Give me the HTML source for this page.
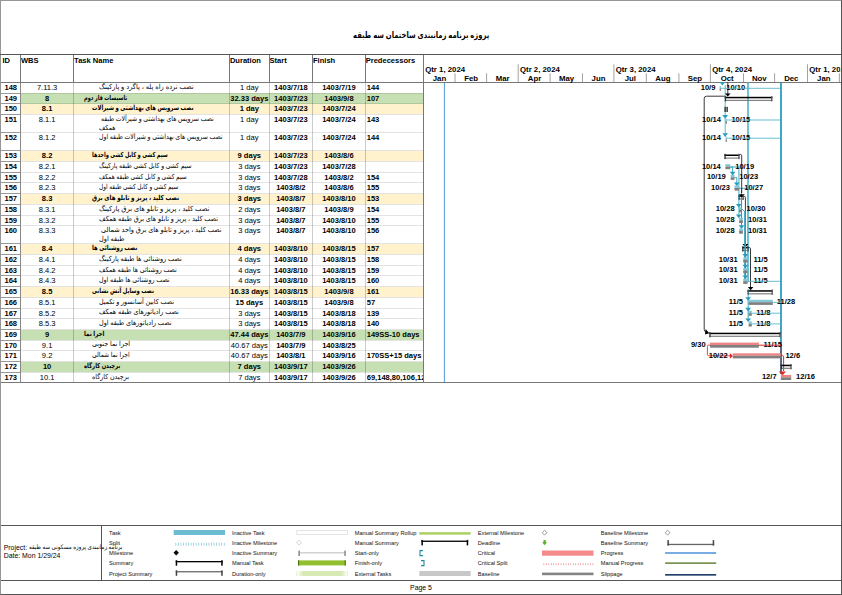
<!DOCTYPE html>
<html lang="fa"><head><meta charset="utf-8"><title>پروژه برنامه زمانبندی ساختمان سه طبقه</title>
<style>
html,body{margin:0;padding:0;background:#fff;}
body{width:842px;height:595px;position:relative;overflow:hidden;font-family:"Liberation Sans","DejaVu Sans",sans-serif;font-size:7.55px;color:#000;}
.a{position:absolute;}
.r{position:absolute;left:0;width:842px;}
.c{position:absolute;top:0;height:100%;white-space:nowrap;overflow:hidden;line-height:9px;box-sizing:border-box;padding-top:0.8px;}
.b{font-weight:bold;}
.ctr{text-align:center;}
.nm{direction:ltr;text-align:left;}
.nm span{unicode-bidi:isolate;direction:rtl;display:inline-block;white-space:nowrap;}
.hl{position:absolute;height:0;border-top:1px solid rgba(0,0,0,0.11);}
.vl{position:absolute;width:0;border-left:1px solid rgba(0,0,0,0.2);}
.lg{position:absolute;font-size:5.65px;white-space:nowrap;line-height:6px;color:#111;}
</style></head><body>
<div class="a" style="left:0;top:0;width:842px;height:595px;border:1px solid #555;box-sizing:border-box;border-top-color:#969696;border-left-color:#969696;"></div>
<div class="a" style="left:0;top:53.7px;width:841px;height:1.1px;background:#555;"></div>
<div class="a b" style="left:300px;width:242px;top:29.5px;text-align:center;font-size:8.6px;line-height:11px;direction:rtl;"><span id="ttl" style="display:inline-block;transform:scaleX(0.79);">پروژه برنامه زمانبندی ساختمان سه طبقه</span></div>
<div class="a b" style="left:2.4px;top:56.2px;line-height:9px;">ID</div>
<div class="a b" style="left:20.9px;top:56.2px;line-height:9px;">WBS</div>
<div class="a b" style="left:74.1px;top:56.2px;line-height:9px;">Task Name</div>
<div class="a b" style="left:229.9px;top:56.2px;line-height:9px;">Duration</div>
<div class="a b" style="left:269.5px;top:56.2px;line-height:9px;">Start</div>
<div class="a b" style="left:313.0px;top:56.2px;line-height:9px;">Finish</div>
<div class="a b" style="left:365.7px;top:56.2px;line-height:9px;">Predecessors</div>
<div class="r" style="top:82.30px;height:10.70px;">
<div class="c b ctr" style="left:1.0px;width:19.5px;">148</div>
<div class="c ctr" style="left:20.5px;width:53.2px;">7.11.3</div>
<div class="c nm" style="left:99.4px;width:130.1px;font-size:7.00px;line-height:8.6px;padding-top:0.6px;"><span id="n148_0" style="transform:scaleX(0.952);transform-origin:0 50%;margin-left:0.0px;">نصب نرده راه پله ، پاگرد و پارکینگ</span></div>
<div class="c ctr" style="left:229.5px;width:39.6px;">1 day</div>
<div class="c b ctr" style="left:269.1px;width:43.5px;">1403/7/18</div>
<div class="c b ctr" style="left:312.6px;width:52.7px;">1403/7/19</div>
<div class="c b" style="left:366.7px;width:56.3px;">144</div>
</div>
<div class="r" style="top:93.00px;height:10.70px;">
<div class="a" style="left:20.9px;top:0.4px;width:402.3px;height:10.20px;background:#c6e0b4;"></div>
<div class="c b ctr" style="left:1.0px;width:19.5px;">149</div>
<div class="c ctr b" style="left:20.5px;width:53.2px;">8</div>
<div class="c nm b" style="left:83.7px;width:145.8px;font-size:7.00px;line-height:8.6px;padding-top:0.6px;"><span id="n149_0" style="transform:scaleX(0.720);transform-origin:0 50%;margin-left:0.0px;">تاسیسات فاز دوم</span></div>
<div class="c ctr b" style="left:229.5px;width:39.6px;">32.33 days</div>
<div class="c b ctr" style="left:269.1px;width:43.5px;">1403/7/23</div>
<div class="c b ctr" style="left:312.6px;width:52.7px;">1403/9/8</div>
<div class="c b" style="left:366.7px;width:56.3px;">107</div>
</div>
<div class="r" style="top:103.70px;height:10.70px;">
<div class="a" style="left:20.9px;top:0.4px;width:402.3px;height:10.20px;background:#fff2cc;"></div>
<div class="c b ctr" style="left:1.0px;width:19.5px;">150</div>
<div class="c ctr b" style="left:20.5px;width:53.2px;">8.1</div>
<div class="c nm b" style="left:91.6px;width:137.9px;font-size:7.00px;line-height:8.6px;padding-top:0.6px;"><span id="n150_0" style="transform:scaleX(0.767);transform-origin:0 50%;margin-left:0.0px;">نصب سرویس های بهداشتی و شیرآلات</span></div>
<div class="c ctr b" style="left:229.5px;width:39.6px;">1 day</div>
<div class="c b ctr" style="left:269.1px;width:43.5px;">1403/7/23</div>
<div class="c b ctr" style="left:312.6px;width:52.7px;">1403/7/24</div>
<div class="c b" style="left:366.7px;width:56.3px;"></div>
</div>
<div class="r" style="top:114.40px;height:18.10px;">
<div class="c b ctr" style="left:1.0px;width:19.5px;">151</div>
<div class="c ctr" style="left:20.5px;width:53.2px;">8.1.1</div>
<div class="c nm" style="left:99.4px;width:130.1px;font-size:7.00px;line-height:8.6px;padding-top:0.6px;"><span id="n151_0" style="transform:scaleX(0.872);transform-origin:0 50%;margin-left:2.0px;">نصب سرویس های بهداشتی و شیرآلات طبقه</span><br><span id="n151_1" style="transform:scaleX(0.872);transform-origin:0 50%;margin-left:0.0px;">همکف</span></div>
<div class="c ctr" style="left:229.5px;width:39.6px;">1 day</div>
<div class="c b ctr" style="left:269.1px;width:43.5px;">1403/7/23</div>
<div class="c b ctr" style="left:312.6px;width:52.7px;">1403/7/24</div>
<div class="c b" style="left:366.7px;width:56.3px;">143</div>
</div>
<div class="r" style="top:132.50px;height:18.10px;">
<div class="c b ctr" style="left:1.0px;width:19.5px;">152</div>
<div class="c ctr" style="left:20.5px;width:53.2px;">8.1.2</div>
<div class="c nm" style="left:99.4px;width:130.1px;font-size:7.00px;line-height:8.6px;padding-top:0.6px;"><span id="n152_0" style="transform:scaleX(0.873);transform-origin:0 50%;margin-left:0.0px;">نصب سرویس های بهداشتی و شیرآلات طبقه اول</span></div>
<div class="c ctr" style="left:229.5px;width:39.6px;">1 day</div>
<div class="c b ctr" style="left:269.1px;width:43.5px;">1403/7/23</div>
<div class="c b ctr" style="left:312.6px;width:52.7px;">1403/7/24</div>
<div class="c b" style="left:366.7px;width:56.3px;">144</div>
</div>
<div class="r" style="top:150.60px;height:10.70px;">
<div class="a" style="left:20.9px;top:0.4px;width:402.3px;height:10.20px;background:#fff2cc;"></div>
<div class="c b ctr" style="left:1.0px;width:19.5px;">153</div>
<div class="c ctr b" style="left:20.5px;width:53.2px;">8.2</div>
<div class="c nm b" style="left:91.6px;width:137.9px;font-size:7.00px;line-height:8.6px;padding-top:0.6px;"><span id="n153_0" style="transform:scaleX(0.724);transform-origin:0 50%;margin-left:0.0px;">سیم کشی و کابل کشی واحدها</span></div>
<div class="c ctr b" style="left:229.5px;width:39.6px;">9 days</div>
<div class="c b ctr" style="left:269.1px;width:43.5px;">1403/7/23</div>
<div class="c b ctr" style="left:312.6px;width:52.7px;">1403/8/6</div>
<div class="c b" style="left:366.7px;width:56.3px;"></div>
</div>
<div class="r" style="top:161.30px;height:10.70px;">
<div class="c b ctr" style="left:1.0px;width:19.5px;">154</div>
<div class="c ctr" style="left:20.5px;width:53.2px;">8.2.1</div>
<div class="c nm" style="left:99.4px;width:130.1px;font-size:7.00px;line-height:8.6px;padding-top:0.6px;"><span id="n154_0" style="transform:scaleX(0.861);transform-origin:0 50%;margin-left:0.0px;">سیم کشی و کابل کشی طبقه پارکینگ</span></div>
<div class="c ctr" style="left:229.5px;width:39.6px;">3 days</div>
<div class="c b ctr" style="left:269.1px;width:43.5px;">1403/7/23</div>
<div class="c b ctr" style="left:312.6px;width:52.7px;">1403/7/28</div>
<div class="c b" style="left:366.7px;width:56.3px;"></div>
</div>
<div class="r" style="top:172.00px;height:10.70px;">
<div class="c b ctr" style="left:1.0px;width:19.5px;">155</div>
<div class="c ctr" style="left:20.5px;width:53.2px;">8.2.2</div>
<div class="c nm" style="left:99.4px;width:130.1px;font-size:7.00px;line-height:8.6px;padding-top:0.6px;"><span id="n155_0" style="transform:scaleX(0.834);transform-origin:0 50%;margin-left:0.0px;">سیم کشی و کابل کشی طبقه همکف</span></div>
<div class="c ctr" style="left:229.5px;width:39.6px;">3 days</div>
<div class="c b ctr" style="left:269.1px;width:43.5px;">1403/7/28</div>
<div class="c b ctr" style="left:312.6px;width:52.7px;">1403/8/2</div>
<div class="c b" style="left:366.7px;width:56.3px;">154</div>
</div>
<div class="r" style="top:182.70px;height:10.70px;">
<div class="c b ctr" style="left:1.0px;width:19.5px;">156</div>
<div class="c ctr" style="left:20.5px;width:53.2px;">8.2.3</div>
<div class="c nm" style="left:99.4px;width:130.1px;font-size:7.00px;line-height:8.6px;padding-top:0.6px;"><span id="n156_0" style="transform:scaleX(0.822);transform-origin:0 50%;margin-left:0.0px;">سیم کشی و کابل کشی طبقه اول</span></div>
<div class="c ctr" style="left:229.5px;width:39.6px;">3 days</div>
<div class="c b ctr" style="left:269.1px;width:43.5px;">1403/8/2</div>
<div class="c b ctr" style="left:312.6px;width:52.7px;">1403/8/6</div>
<div class="c b" style="left:366.7px;width:56.3px;">155</div>
</div>
<div class="r" style="top:193.40px;height:10.70px;">
<div class="a" style="left:20.9px;top:0.4px;width:402.3px;height:10.20px;background:#fff2cc;"></div>
<div class="c b ctr" style="left:1.0px;width:19.5px;">157</div>
<div class="c ctr b" style="left:20.5px;width:53.2px;">8.3</div>
<div class="c nm b" style="left:91.6px;width:137.9px;font-size:7.00px;line-height:8.6px;padding-top:0.6px;"><span id="n157_0" style="transform:scaleX(0.810);transform-origin:0 50%;margin-left:0.0px;">نصب کلید ، پریز و تابلو های برق</span></div>
<div class="c ctr b" style="left:229.5px;width:39.6px;">3 days</div>
<div class="c b ctr" style="left:269.1px;width:43.5px;">1403/8/7</div>
<div class="c b ctr" style="left:312.6px;width:52.7px;">1403/8/10</div>
<div class="c b" style="left:366.7px;width:56.3px;">153</div>
</div>
<div class="r" style="top:204.10px;height:10.70px;">
<div class="c b ctr" style="left:1.0px;width:19.5px;">158</div>
<div class="c ctr" style="left:20.5px;width:53.2px;">8.3.1</div>
<div class="c nm" style="left:99.4px;width:130.1px;font-size:7.00px;line-height:8.6px;padding-top:0.6px;"><span id="n158_0" style="transform:scaleX(0.960);transform-origin:0 50%;margin-left:0.0px;">نصب کلید ، پریز و تابلو های برق پارکینگ</span></div>
<div class="c ctr" style="left:229.5px;width:39.6px;">2 days</div>
<div class="c b ctr" style="left:269.1px;width:43.5px;">1403/8/7</div>
<div class="c b ctr" style="left:312.6px;width:52.7px;">1403/8/9</div>
<div class="c b" style="left:366.7px;width:56.3px;">154</div>
</div>
<div class="r" style="top:214.80px;height:10.70px;">
<div class="c b ctr" style="left:1.0px;width:19.5px;">159</div>
<div class="c ctr" style="left:20.5px;width:53.2px;">8.3.2</div>
<div class="c nm" style="left:99.4px;width:130.1px;font-size:7.00px;line-height:8.6px;padding-top:0.6px;"><span id="n159_0" style="transform:scaleX(0.919);transform-origin:0 50%;margin-left:0.0px;">نصب کلید ، پریز و تابلو های برق طبقه همکف</span></div>
<div class="c ctr" style="left:229.5px;width:39.6px;">3 days</div>
<div class="c b ctr" style="left:269.1px;width:43.5px;">1403/8/7</div>
<div class="c b ctr" style="left:312.6px;width:52.7px;">1403/8/10</div>
<div class="c b" style="left:366.7px;width:56.3px;">155</div>
</div>
<div class="r" style="top:225.50px;height:18.10px;">
<div class="c b ctr" style="left:1.0px;width:19.5px;">160</div>
<div class="c ctr" style="left:20.5px;width:53.2px;">8.3.3</div>
<div class="c nm" style="left:99.4px;width:130.1px;font-size:7.00px;line-height:8.6px;padding-top:0.6px;"><span id="n160_0" style="transform:scaleX(0.935);transform-origin:0 50%;margin-left:2.0px;">نصب کلید ، پریز و تابلو های برق  واحد شمالی</span><br><span id="n160_1" style="transform:scaleX(0.935);transform-origin:0 50%;margin-left:0.0px;">طبقه اول</span></div>
<div class="c ctr" style="left:229.5px;width:39.6px;">3 days</div>
<div class="c b ctr" style="left:269.1px;width:43.5px;">1403/8/7</div>
<div class="c b ctr" style="left:312.6px;width:52.7px;">1403/8/10</div>
<div class="c b" style="left:366.7px;width:56.3px;">156</div>
</div>
<div class="r" style="top:243.60px;height:10.70px;">
<div class="a" style="left:20.9px;top:0.4px;width:402.3px;height:10.20px;background:#fff2cc;"></div>
<div class="c b ctr" style="left:1.0px;width:19.5px;">161</div>
<div class="c ctr b" style="left:20.5px;width:53.2px;">8.4</div>
<div class="c nm b" style="left:91.6px;width:137.9px;font-size:7.00px;line-height:8.6px;padding-top:0.6px;"><span id="n161_0" style="transform:scaleX(0.772);transform-origin:0 50%;margin-left:0.0px;">نصب روشنائی ها</span></div>
<div class="c ctr b" style="left:229.5px;width:39.6px;">4 days</div>
<div class="c b ctr" style="left:269.1px;width:43.5px;">1403/8/10</div>
<div class="c b ctr" style="left:312.6px;width:52.7px;">1403/8/15</div>
<div class="c b" style="left:366.7px;width:56.3px;">157</div>
</div>
<div class="r" style="top:254.30px;height:10.70px;">
<div class="c b ctr" style="left:1.0px;width:19.5px;">162</div>
<div class="c ctr" style="left:20.5px;width:53.2px;">8.4.1</div>
<div class="c nm" style="left:99.4px;width:130.1px;font-size:7.00px;line-height:8.6px;padding-top:0.6px;"><span id="n162_0" style="transform:scaleX(0.925);transform-origin:0 50%;margin-left:0.0px;">نصب روشنائی ها طبقه پارکینگ</span></div>
<div class="c ctr" style="left:229.5px;width:39.6px;">4 days</div>
<div class="c b ctr" style="left:269.1px;width:43.5px;">1403/8/10</div>
<div class="c b ctr" style="left:312.6px;width:52.7px;">1403/8/15</div>
<div class="c b" style="left:366.7px;width:56.3px;">158</div>
</div>
<div class="r" style="top:265.00px;height:10.70px;">
<div class="c b ctr" style="left:1.0px;width:19.5px;">163</div>
<div class="c ctr" style="left:20.5px;width:53.2px;">8.4.2</div>
<div class="c nm" style="left:99.4px;width:130.1px;font-size:7.00px;line-height:8.6px;padding-top:0.6px;"><span id="n163_0" style="transform:scaleX(0.894);transform-origin:0 50%;margin-left:0.0px;">نصب روشنائی ها طبقه همکف</span></div>
<div class="c ctr" style="left:229.5px;width:39.6px;">4 days</div>
<div class="c b ctr" style="left:269.1px;width:43.5px;">1403/8/10</div>
<div class="c b ctr" style="left:312.6px;width:52.7px;">1403/8/15</div>
<div class="c b" style="left:366.7px;width:56.3px;">159</div>
</div>
<div class="r" style="top:275.70px;height:10.70px;">
<div class="c b ctr" style="left:1.0px;width:19.5px;">164</div>
<div class="c ctr" style="left:20.5px;width:53.2px;">8.4.3</div>
<div class="c nm" style="left:99.4px;width:130.1px;font-size:7.00px;line-height:8.6px;padding-top:0.6px;"><span id="n164_0" style="transform:scaleX(0.899);transform-origin:0 50%;margin-left:0.0px;">نصب روشنائی ها طبقه اول</span></div>
<div class="c ctr" style="left:229.5px;width:39.6px;">4 days</div>
<div class="c b ctr" style="left:269.1px;width:43.5px;">1403/8/10</div>
<div class="c b ctr" style="left:312.6px;width:52.7px;">1403/8/15</div>
<div class="c b" style="left:366.7px;width:56.3px;">160</div>
</div>
<div class="r" style="top:286.40px;height:10.70px;">
<div class="a" style="left:20.9px;top:0.4px;width:402.3px;height:10.20px;background:#fff2cc;"></div>
<div class="c b ctr" style="left:1.0px;width:19.5px;">165</div>
<div class="c ctr b" style="left:20.5px;width:53.2px;">8.5</div>
<div class="c nm b" style="left:91.6px;width:137.9px;font-size:7.00px;line-height:8.6px;padding-top:0.6px;"><span id="n165_0" style="transform:scaleX(0.751);transform-origin:0 50%;margin-left:0.0px;">نصب وسایل آتش نشانی</span></div>
<div class="c ctr b" style="left:229.5px;width:39.6px;">16.33 days</div>
<div class="c b ctr" style="left:269.1px;width:43.5px;">1403/8/15</div>
<div class="c b ctr" style="left:312.6px;width:52.7px;">1403/9/8</div>
<div class="c b" style="left:366.7px;width:56.3px;">161</div>
</div>
<div class="r" style="top:297.10px;height:10.70px;">
<div class="c b ctr" style="left:1.0px;width:19.5px;">166</div>
<div class="c ctr" style="left:20.5px;width:53.2px;">8.5.1</div>
<div class="c nm" style="left:99.4px;width:130.1px;font-size:7.00px;line-height:8.6px;padding-top:0.6px;"><span id="n166_0" style="transform:scaleX(0.899);transform-origin:0 50%;margin-left:0.0px;">نصب کابین آسانسور و تکمیل</span></div>
<div class="c ctr b" style="left:229.5px;width:39.6px;">15 days</div>
<div class="c b ctr" style="left:269.1px;width:43.5px;">1403/8/15</div>
<div class="c b ctr" style="left:312.6px;width:52.7px;">1403/9/8</div>
<div class="c b" style="left:366.7px;width:56.3px;">57</div>
</div>
<div class="r" style="top:307.80px;height:10.70px;">
<div class="c b ctr" style="left:1.0px;width:19.5px;">167</div>
<div class="c ctr" style="left:20.5px;width:53.2px;">8.5.2</div>
<div class="c nm" style="left:99.4px;width:130.1px;font-size:7.00px;line-height:8.6px;padding-top:0.6px;"><span id="n167_0" style="transform:scaleX(0.914);transform-origin:0 50%;margin-left:0.0px;">نصب رادیاتورهای طبقه همکف</span></div>
<div class="c ctr" style="left:229.5px;width:39.6px;">3 days</div>
<div class="c b ctr" style="left:269.1px;width:43.5px;">1403/8/15</div>
<div class="c b ctr" style="left:312.6px;width:52.7px;">1403/8/18</div>
<div class="c b" style="left:366.7px;width:56.3px;">139</div>
</div>
<div class="r" style="top:318.50px;height:10.70px;">
<div class="c b ctr" style="left:1.0px;width:19.5px;">168</div>
<div class="c ctr" style="left:20.5px;width:53.2px;">8.5.3</div>
<div class="c nm" style="left:99.4px;width:130.1px;font-size:7.00px;line-height:8.6px;padding-top:0.6px;"><span id="n168_0" style="transform:scaleX(0.919);transform-origin:0 50%;margin-left:0.0px;">نصب رادیاتورهای طبقه اول</span></div>
<div class="c ctr" style="left:229.5px;width:39.6px;">3 days</div>
<div class="c b ctr" style="left:269.1px;width:43.5px;">1403/8/15</div>
<div class="c b ctr" style="left:312.6px;width:52.7px;">1403/8/18</div>
<div class="c b" style="left:366.7px;width:56.3px;">140</div>
</div>
<div class="r" style="top:329.20px;height:10.70px;">
<div class="a" style="left:20.9px;top:0.4px;width:402.3px;height:10.20px;background:#c6e0b4;"></div>
<div class="c b ctr" style="left:1.0px;width:19.5px;">169</div>
<div class="c ctr b" style="left:20.5px;width:53.2px;">9</div>
<div class="c nm b" style="left:83.7px;width:145.8px;font-size:7.00px;line-height:8.6px;padding-top:0.6px;"><span id="n169_0" style="transform:scaleX(0.782);transform-origin:0 50%;margin-left:0.0px;">اجرا نما</span></div>
<div class="c ctr b" style="left:229.5px;width:39.6px;">47.44 days</div>
<div class="c b ctr" style="left:269.1px;width:43.5px;">1403/7/9</div>
<div class="c b ctr" style="left:312.6px;width:52.7px;">1403/9/16</div>
<div class="c b" style="left:366.7px;width:56.3px;">149SS-10 days</div>
</div>
<div class="r" style="top:339.90px;height:10.70px;">
<div class="c b ctr" style="left:1.0px;width:19.5px;">170</div>
<div class="c ctr" style="left:20.5px;width:53.2px;">9.1</div>
<div class="c nm" style="left:91.6px;width:137.9px;font-size:7.00px;line-height:8.6px;padding-top:0.6px;"><span id="n170_0" style="transform:scaleX(0.908);transform-origin:0 50%;margin-left:0.0px;">اجرا نما جنوبی</span></div>
<div class="c ctr" style="left:229.5px;width:39.6px;">40.67 days</div>
<div class="c b ctr" style="left:269.1px;width:43.5px;">1403/7/9</div>
<div class="c b ctr" style="left:312.6px;width:52.7px;">1403/8/25</div>
<div class="c b" style="left:366.7px;width:56.3px;"></div>
</div>
<div class="r" style="top:350.60px;height:10.70px;">
<div class="c b ctr" style="left:1.0px;width:19.5px;">171</div>
<div class="c ctr" style="left:20.5px;width:53.2px;">9.2</div>
<div class="c nm" style="left:91.6px;width:137.9px;font-size:7.00px;line-height:8.6px;padding-top:0.6px;"><span id="n171_0" style="transform:scaleX(0.855);transform-origin:0 50%;margin-left:0.0px;">اجرا نما شمالی</span></div>
<div class="c ctr" style="left:229.5px;width:39.6px;">40.67 days</div>
<div class="c b ctr" style="left:269.1px;width:43.5px;">1403/8/1</div>
<div class="c b ctr" style="left:312.6px;width:52.7px;">1403/9/16</div>
<div class="c b" style="left:366.7px;width:56.3px;">170SS+15 days</div>
</div>
<div class="r" style="top:361.30px;height:10.70px;">
<div class="a" style="left:20.9px;top:0.4px;width:402.3px;height:10.20px;background:#c6e0b4;"></div>
<div class="c b ctr" style="left:1.0px;width:19.5px;">172</div>
<div class="c ctr b" style="left:20.5px;width:53.2px;">10</div>
<div class="c nm b" style="left:83.7px;width:145.8px;font-size:7.00px;line-height:8.6px;padding-top:0.6px;"><span id="n172_0" style="transform:scaleX(0.750);transform-origin:0 50%;margin-left:0.0px;">برچیدن کارگاه</span></div>
<div class="c ctr b" style="left:229.5px;width:39.6px;">7 days</div>
<div class="c b ctr" style="left:269.1px;width:43.5px;">1403/9/17</div>
<div class="c b ctr" style="left:312.6px;width:52.7px;">1403/9/26</div>
<div class="c b" style="left:366.7px;width:56.3px;"></div>
</div>
<div class="r" style="top:372.00px;height:10.70px;">
<div class="c b ctr" style="left:1.0px;width:19.5px;">173</div>
<div class="c ctr" style="left:20.5px;width:53.2px;">10.1</div>
<div class="c nm" style="left:91.6px;width:137.9px;font-size:7.00px;line-height:8.6px;padding-top:0.6px;"><span id="n173_0" style="transform:scaleX(0.900);transform-origin:0 50%;margin-left:0.0px;">برچیدن کارگاه</span></div>
<div class="c ctr" style="left:229.5px;width:39.6px;">7 days</div>
<div class="c b ctr" style="left:269.1px;width:43.5px;">1403/9/17</div>
<div class="c b ctr" style="left:312.6px;width:52.7px;">1403/9/26</div>
<div class="c b" style="left:366.7px;width:56.3px;">69,148,80,106,12</div>
</div>
<div class="hl" style="left:20.5px;top:92.70px;width:402.9px;"></div>
<div class="hl" style="left:1px;top:92.70px;width:19.5px;border-top-color:#999;"></div>
<div class="hl" style="left:20.5px;top:103.40px;width:402.9px;"></div>
<div class="hl" style="left:1px;top:103.40px;width:19.5px;border-top-color:#999;"></div>
<div class="hl" style="left:20.5px;top:114.10px;width:402.9px;"></div>
<div class="hl" style="left:1px;top:114.10px;width:19.5px;border-top-color:#999;"></div>
<div class="hl" style="left:20.5px;top:132.20px;width:402.9px;"></div>
<div class="hl" style="left:1px;top:132.20px;width:19.5px;border-top-color:#999;"></div>
<div class="hl" style="left:20.5px;top:150.30px;width:402.9px;"></div>
<div class="hl" style="left:1px;top:150.30px;width:19.5px;border-top-color:#999;"></div>
<div class="hl" style="left:20.5px;top:161.00px;width:402.9px;"></div>
<div class="hl" style="left:1px;top:161.00px;width:19.5px;border-top-color:#999;"></div>
<div class="hl" style="left:20.5px;top:171.70px;width:402.9px;"></div>
<div class="hl" style="left:1px;top:171.70px;width:19.5px;border-top-color:#999;"></div>
<div class="hl" style="left:20.5px;top:182.40px;width:402.9px;"></div>
<div class="hl" style="left:1px;top:182.40px;width:19.5px;border-top-color:#999;"></div>
<div class="hl" style="left:20.5px;top:193.10px;width:402.9px;"></div>
<div class="hl" style="left:1px;top:193.10px;width:19.5px;border-top-color:#999;"></div>
<div class="hl" style="left:20.5px;top:203.80px;width:402.9px;"></div>
<div class="hl" style="left:1px;top:203.80px;width:19.5px;border-top-color:#999;"></div>
<div class="hl" style="left:20.5px;top:214.50px;width:402.9px;"></div>
<div class="hl" style="left:1px;top:214.50px;width:19.5px;border-top-color:#999;"></div>
<div class="hl" style="left:20.5px;top:225.20px;width:402.9px;"></div>
<div class="hl" style="left:1px;top:225.20px;width:19.5px;border-top-color:#999;"></div>
<div class="hl" style="left:20.5px;top:243.30px;width:402.9px;"></div>
<div class="hl" style="left:1px;top:243.30px;width:19.5px;border-top-color:#999;"></div>
<div class="hl" style="left:20.5px;top:254.00px;width:402.9px;"></div>
<div class="hl" style="left:1px;top:254.00px;width:19.5px;border-top-color:#999;"></div>
<div class="hl" style="left:20.5px;top:264.70px;width:402.9px;"></div>
<div class="hl" style="left:1px;top:264.70px;width:19.5px;border-top-color:#999;"></div>
<div class="hl" style="left:20.5px;top:275.40px;width:402.9px;"></div>
<div class="hl" style="left:1px;top:275.40px;width:19.5px;border-top-color:#999;"></div>
<div class="hl" style="left:20.5px;top:286.10px;width:402.9px;"></div>
<div class="hl" style="left:1px;top:286.10px;width:19.5px;border-top-color:#999;"></div>
<div class="hl" style="left:20.5px;top:296.80px;width:402.9px;"></div>
<div class="hl" style="left:1px;top:296.80px;width:19.5px;border-top-color:#999;"></div>
<div class="hl" style="left:20.5px;top:307.50px;width:402.9px;"></div>
<div class="hl" style="left:1px;top:307.50px;width:19.5px;border-top-color:#999;"></div>
<div class="hl" style="left:20.5px;top:318.20px;width:402.9px;"></div>
<div class="hl" style="left:1px;top:318.20px;width:19.5px;border-top-color:#999;"></div>
<div class="hl" style="left:20.5px;top:328.90px;width:402.9px;"></div>
<div class="hl" style="left:1px;top:328.90px;width:19.5px;border-top-color:#999;"></div>
<div class="hl" style="left:20.5px;top:339.60px;width:402.9px;"></div>
<div class="hl" style="left:1px;top:339.60px;width:19.5px;border-top-color:#999;"></div>
<div class="hl" style="left:20.5px;top:350.30px;width:402.9px;"></div>
<div class="hl" style="left:1px;top:350.30px;width:19.5px;border-top-color:#999;"></div>
<div class="hl" style="left:20.5px;top:361.00px;width:402.9px;"></div>
<div class="hl" style="left:1px;top:361.00px;width:19.5px;border-top-color:#999;"></div>
<div class="hl" style="left:20.5px;top:371.70px;width:402.9px;"></div>
<div class="hl" style="left:1px;top:371.70px;width:19.5px;border-top-color:#999;"></div>
<div class="vl" style="left:20.2px;top:54.5px;height:328.2px;border-left-color:#888;"></div>
<div class="vl" style="left:73.4px;top:54.5px;height:328.2px;border-left-color:rgba(0,0,0,0.2);"></div>
<div class="vl" style="left:229.2px;top:54.5px;height:328.2px;border-left-color:rgba(0,0,0,0.2);"></div>
<div class="vl" style="left:268.8px;top:54.5px;height:328.2px;border-left-color:rgba(0,0,0,0.2);"></div>
<div class="vl" style="left:312.3px;top:54.5px;height:328.2px;border-left-color:rgba(0,0,0,0.2);"></div>
<div class="vl" style="left:365.0px;top:54.5px;height:328.2px;border-left-color:rgba(0,0,0,0.2);"></div>
<div class="vl" style="left:20.2px;top:54.5px;height:27.8px;border-left-color:#777;"></div>
<div class="vl" style="left:73.4px;top:54.5px;height:27.8px;border-left-color:#777;"></div>
<div class="vl" style="left:229.2px;top:54.5px;height:27.8px;border-left-color:#777;"></div>
<div class="vl" style="left:268.8px;top:54.5px;height:27.8px;border-left-color:#777;"></div>
<div class="vl" style="left:312.3px;top:54.5px;height:27.8px;border-left-color:#777;"></div>
<div class="vl" style="left:365.0px;top:54.5px;height:27.8px;border-left-color:#777;"></div>
<div class="a" style="left:423.0px;top:54.5px;width:0.9px;height:328.2px;background:#777;"></div>
<div class="a" style="left:1px;top:81.9px;width:840px;height:0.9px;background:#777;"></div>
<div class="a" style="left:1px;top:382.3px;width:840px;height:0.9px;background:#777;"></div>
<svg class="a" style="left:0;top:0;" width="842" height="595" viewBox="0 0 842 595" font-family="Liberation Sans, DejaVu Sans, sans-serif" font-weight="bold" font-size="7.55">
<defs><clipPath id="cp"><rect x="423.9" y="54" width="416.6" height="329"/></clipPath></defs>
<g clip-path="url(#cp)">
<line x1="518.2" y1="64.3" x2="518.2" y2="82.3" stroke="#8a8a8a" stroke-width="0.8"/>
<line x1="613.9" y1="64.3" x2="613.9" y2="82.3" stroke="#8a8a8a" stroke-width="0.8"/>
<line x1="710.4" y1="64.3" x2="710.4" y2="82.3" stroke="#8a8a8a" stroke-width="0.8"/>
<line x1="807.5" y1="64.3" x2="807.5" y2="82.3" stroke="#8a8a8a" stroke-width="0.8"/>
<line x1="455.0" y1="73.3" x2="455.0" y2="82.3" stroke="#8a8a8a" stroke-width="0.8"/>
<line x1="486.6" y1="73.3" x2="486.6" y2="82.3" stroke="#8a8a8a" stroke-width="0.8"/>
<line x1="550.1" y1="73.3" x2="550.1" y2="82.3" stroke="#8a8a8a" stroke-width="0.8"/>
<line x1="582.5" y1="73.3" x2="582.5" y2="82.3" stroke="#8a8a8a" stroke-width="0.8"/>
<line x1="646.3" y1="73.3" x2="646.3" y2="82.3" stroke="#8a8a8a" stroke-width="0.8"/>
<line x1="678.9" y1="73.3" x2="678.9" y2="82.3" stroke="#8a8a8a" stroke-width="0.8"/>
<line x1="743.5" y1="73.3" x2="743.5" y2="82.3" stroke="#8a8a8a" stroke-width="0.8"/>
<line x1="774.6" y1="73.3" x2="774.6" y2="82.3" stroke="#8a8a8a" stroke-width="0.8"/>
<line x1="839.4" y1="73.3" x2="839.4" y2="82.3" stroke="#8a8a8a" stroke-width="0.8"/>
<text x="425.2" y="71.9" font-size="7.8">Qtr 1, 2024</text>
<text x="520.0" y="71.9" font-size="7.8">Qtr 2, 2024</text>
<text x="615.7" y="71.9" font-size="7.8">Qtr 3, 2024</text>
<text x="712.2" y="71.9" font-size="7.8">Qtr 4, 2024</text>
<text x="809.3" y="71.9" font-size="7.8">Qtr 1, 2025</text>
<text x="439.5" y="80.7" font-size="7.8" text-anchor="middle">Jan</text>
<text x="471.1" y="80.7" font-size="7.8" text-anchor="middle">Feb</text>
<text x="502.7" y="80.7" font-size="7.8" text-anchor="middle">Mar</text>
<text x="534.5" y="80.7" font-size="7.8" text-anchor="middle">Apr</text>
<text x="566.6" y="80.7" font-size="7.8" text-anchor="middle">May</text>
<text x="598.5" y="80.7" font-size="7.8" text-anchor="middle">Jun</text>
<text x="630.4" y="80.7" font-size="7.8" text-anchor="middle">Jul</text>
<text x="662.9" y="80.7" font-size="7.8" text-anchor="middle">Aug</text>
<text x="694.9" y="80.7" font-size="7.8" text-anchor="middle">Sep</text>
<text x="727.2" y="80.7" font-size="7.8" text-anchor="middle">Oct</text>
<text x="759.3" y="80.7" font-size="7.8" text-anchor="middle">Nov</text>
<text x="791.3" y="80.7" font-size="7.8" text-anchor="middle">Dec</text>
<text x="823.8" y="80.7" font-size="7.8" text-anchor="middle">Jan</text>
<line x1="444.4" y1="82.5" x2="444.4" y2="382.5" stroke="#3d8fd6" stroke-width="0.9"/>
<line x1="781" y1="82.5" x2="781" y2="346" stroke="#2a9dbc" stroke-width="1.8"/>
<line x1="781" y1="345" x2="781" y2="374" stroke="#4a5878" stroke-width="1.8"/>
<line x1="748" y1="82.5" x2="748" y2="282" stroke="#62bcd2" stroke-width="1.8"/>
<line x1="748.2" y1="295" x2="748.2" y2="321" stroke="#62bcd2" stroke-width="1.3"/>
<line x1="725.2" y1="85" x2="725.2" y2="137" stroke="#62bcd2" stroke-width="1"/>
<line x1="738.9" y1="167" x2="738.9" y2="217" stroke="#62bcd2" stroke-width="1.2"/>
<line x1="741.5" y1="189" x2="741.5" y2="228" stroke="#2a9dbc" stroke-width="1.1"/>
<path d="M730.2 166.9 H732.6 V175" fill="none" stroke="#2a9dbc" stroke-width="0.9"/>
<path d="M734.5 177.6 H736.8 V185.6" fill="none" stroke="#2a9dbc" stroke-width="0.9"/>
<path d="M739 188.3 H748" fill="none" stroke="#2a9dbc" stroke-width="0.9"/>
<path d="M730.2 167 H738.9" fill="none" stroke="#2a9dbc" stroke-width="0.9"/>
<path d="M741.6 208.6 L745.1 212" fill="none" stroke="#2a9dbc" stroke-width="0.9"/>
<path d="M719.4 82.0 L725.2 82.0 L722.3 85.6 Z" fill="#2a9dbc"/>
<rect x="719.6" y="85.8" width="1.3" height="2.4" fill="#84c8d8"/>
<rect x="719.6" y="88.2" width="1.3" height="2.7" fill="#808080"/>
<text x="715.4" y="90.0" text-anchor="end">10/9</text>
<text x="726.2" y="90.0" text-anchor="start">10/10</text>
<line x1="727.8" y1="82.5" x2="727.8" y2="94" stroke="#000" stroke-width="0.8"/>
<path d="M725.0 93.4 L730.6 93.4 L727.8 96.6 Z" fill="#000"/>
<path d="M724.8 96.2 H706.6 Q704.2 96.2 704.2 98.6 V329.3 Q704.2 332 706.8 332.2" fill="none" stroke="#222" stroke-width="0.9"/>
<path d="M705.6 329 L709.4 333.2 L705 334.6 Z" fill="#000"/>
<rect x="724.8" y="96.8" width="47.6" height="1.5" fill="#000"/>
<rect x="724.8" y="99.8" width="47.6" height="1.2" fill="#808080"/>
<rect x="724.8" y="96.1" width="1.3" height="5.3" fill="#333"/>
<rect x="771.1" y="96.1" width="1.3" height="5.3" fill="#555"/>
<rect x="724.4" y="106.8" width="1.5" height="5.2" fill="#3a3a3a"/><rect x="726.4" y="106.8" width="1.5" height="5.2" fill="#3a3a3a"/>
<path d="M722.3 115.1 L728.1 115.1 L725.2 118.7 Z" fill="#2a9dbc"/>
<rect x="725.6" y="118.7" width="1.3" height="2.4" fill="#84c8d8"/>
<rect x="725.6" y="121.1" width="1.3" height="2.7" fill="#808080"/>
<text x="721.0" y="122.0" text-anchor="end">10/14</text>
<text x="731.4" y="122.0" text-anchor="start">10/15</text>
<path d="M722.3 133.2 L728.1 133.2 L725.2 136.8 Z" fill="#2a9dbc"/>
<rect x="725.6" y="136.8" width="1.3" height="2.4" fill="#84c8d8"/>
<rect x="725.6" y="139.2" width="1.3" height="2.7" fill="#808080"/>
<text x="721.0" y="140.1" text-anchor="end">10/14</text>
<text x="731.4" y="140.1" text-anchor="start">10/15</text>
<rect x="724.4" y="154.5" width="15.2" height="1.5" fill="#000"/>
<rect x="724.4" y="157.5" width="15.2" height="1.2" fill="#808080"/>
<rect x="724.4" y="153.8" width="1.3" height="5.3" fill="#333"/>
<rect x="738.3" y="153.8" width="1.3" height="5.3" fill="#555"/>
<path d="M739.6 154.4 H740.4 Q741.7 154.4 741.7 155.8 V193" fill="none" stroke="#222" stroke-width="0.9"/>
<path d="M738.9 194.2 L744.9 194.2 L741.9 197.2 Z" fill="#000"/>
<rect x="725.4" y="164.1" width="4.8" height="2.4" fill="#84c8d8"/>
<rect x="725.4" y="166.5" width="4.8" height="2.7" fill="#808080"/>
<text x="720.8" y="168.6" text-anchor="end">10/14</text>
<text x="735.2" y="168.6" text-anchor="start">10/19</text>
<path d="M729.7 171.8 L735.5 171.8 L732.6 175.4 Z" fill="#2a9dbc"/>
<rect x="730.7" y="174.8" width="3.8" height="2.4" fill="#84c8d8"/>
<rect x="730.7" y="177.2" width="3.8" height="2.7" fill="#808080"/>
<text x="725.8" y="179.3" text-anchor="end">10/19</text>
<text x="739.2" y="179.3" text-anchor="start">10/23</text>
<path d="M733.9 182.5 L739.7 182.5 L736.8 186.1 Z" fill="#2a9dbc"/>
<rect x="734.5" y="185.5" width="4.5" height="2.4" fill="#84c8d8"/>
<rect x="734.5" y="187.9" width="4.5" height="2.7" fill="#808080"/>
<text x="729.9" y="190.0" text-anchor="end">10/23</text>
<text x="744.2" y="190.0" text-anchor="start">10/27</text>
<rect x="738.5" y="195.3" width="5.3" height="1.5" fill="#000"/>
<rect x="738.5" y="198.3" width="5.3" height="1.2" fill="#808080"/>
<rect x="738.5" y="194.6" width="1.3" height="5.3" fill="#2d5f6e"/>
<rect x="742.5" y="194.6" width="1.3" height="5.3" fill="#555"/>
<path d="M743.8 196.4 H744.4 Q745.4 196.4 745.4 197.6 V244" fill="none" stroke="#222" stroke-width="0.9"/>
<path d="M735.9 203.9 L741.7 203.9 L738.8 207.5 Z" fill="#2a9dbc"/>
<rect x="739.1" y="207.2" width="2.5" height="2.4" fill="#84c8d8"/>
<rect x="739.1" y="209.6" width="2.5" height="2.7" fill="#808080"/>
<text x="734.6" y="211.4" text-anchor="end">10/28</text>
<text x="746.6" y="211.4" text-anchor="start">10/30</text>
<path d="M735.9 214.6 L741.7 214.6 L738.8 218.2 Z" fill="#2a9dbc"/>
<rect x="739.1" y="217.9" width="3.8" height="2.4" fill="#84c8d8"/>
<rect x="739.1" y="220.3" width="3.8" height="2.7" fill="#808080"/>
<text x="734.6" y="222.1" text-anchor="end">10/28</text>
<text x="748.0" y="222.1" text-anchor="start">10/31</text>
<path d="M738.6 225.3 L744.4 225.3 L741.5 228.9 Z" fill="#2a9dbc"/>
<rect x="739.1" y="228.6" width="3.8" height="2.4" fill="#84c8d8"/>
<rect x="739.1" y="231.0" width="3.8" height="2.7" fill="#808080"/>
<text x="734.6" y="232.8" text-anchor="end">10/28</text>
<text x="748.0" y="232.8" text-anchor="start">10/31</text>
<path d="M742.4 244.0 L748.4 244.0 L745.4 247.2 Z" fill="#000"/>
<rect x="742.2" y="246.9" width="6.5" height="1.5" fill="#000"/>
<rect x="742.2" y="249.9" width="6.5" height="1.2" fill="#808080"/>
<rect x="742.2" y="246.2" width="1.3" height="5.3" fill="#333"/>
<rect x="747.4" y="246.2" width="1.3" height="5.3" fill="#2d5f6e"/>
<path d="M748.6 247.6 H749.4 Q750.5 247.6 750.5 248.8 V287" fill="none" stroke="#222" stroke-width="0.9"/>
<path d="M747.8 287.0 L753.4 287.0 L750.6 290.2 Z" fill="#000"/>
<line x1="745.1" y1="211" x2="745.1" y2="281.6" stroke="#2a9dbc" stroke-width="1.8"/>
<path d="M742.5 254.1 L748.3 254.1 L745.4 257.7 Z" fill="#2a9dbc"/>
<rect x="743.2" y="257.4" width="4.4" height="2.4" fill="#84c8d8"/>
<rect x="743.2" y="259.8" width="4.4" height="2.7" fill="#808080"/>
<text x="737.6" y="261.6" text-anchor="end">10/31</text>
<text x="753.4" y="261.6" text-anchor="start">11/5</text>
<path d="M742.5 264.8 L748.3 264.8 L745.4 268.4 Z" fill="#2a9dbc"/>
<rect x="743.2" y="268.1" width="4.4" height="2.4" fill="#84c8d8"/>
<rect x="743.2" y="270.5" width="4.4" height="2.7" fill="#808080"/>
<text x="737.6" y="272.3" text-anchor="end">10/31</text>
<text x="753.4" y="272.3" text-anchor="start">11/5</text>
<path d="M742.5 275.5 L748.3 275.5 L745.4 279.1 Z" fill="#2a9dbc"/>
<rect x="743.2" y="278.8" width="4.4" height="2.4" fill="#84c8d8"/>
<rect x="743.2" y="281.2" width="4.4" height="2.7" fill="#808080"/>
<text x="737.6" y="283.0" text-anchor="end">10/31</text>
<text x="753.4" y="283.0" text-anchor="start">11/5</text>
<rect x="747.5" y="290.2" width="25.3" height="1.5" fill="#000"/>
<rect x="747.5" y="293.2" width="25.3" height="1.2" fill="#808080"/>
<rect x="747.5" y="289.5" width="1.3" height="5.3" fill="#2d5f6e"/>
<rect x="771.5" y="289.5" width="1.3" height="5.3" fill="#555"/>
<path d="M745.3 297.2 L751.1 297.2 L748.2 300.8 Z" fill="#2a9dbc"/>
<rect x="748.6" y="299.8" width="24.2" height="2.4" fill="#84c8d8"/>
<rect x="748.6" y="302.2" width="24.2" height="2.7" fill="#808080"/>
<text x="743.0" y="304.3" text-anchor="end">11/5</text>
<text x="776.7" y="304.3" text-anchor="start">11/28</text>
<path d="M745.3 307.8 L751.1 307.8 L748.2 311.4 Z" fill="#2a9dbc"/>
<rect x="748.6" y="310.7" width="3.2" height="2.4" fill="#84c8d8"/>
<rect x="748.6" y="313.1" width="3.2" height="2.7" fill="#808080"/>
<text x="743.0" y="315.0" text-anchor="end">11/5</text>
<text x="756.2" y="315.0" text-anchor="start">11/8</text>
<path d="M745.3 318.5 L751.1 318.5 L748.2 322.1 Z" fill="#2a9dbc"/>
<rect x="748.6" y="321.4" width="3.2" height="2.4" fill="#84c8d8"/>
<rect x="748.6" y="323.8" width="3.2" height="2.7" fill="#808080"/>
<text x="743.0" y="325.7" text-anchor="end">11/5</text>
<text x="756.2" y="325.7" text-anchor="start">11/8</text>
<rect x="709.3" y="332.7" width="71.3" height="1.5" fill="#000"/>
<rect x="709.3" y="335.7" width="71.3" height="1.2" fill="#808080"/>
<rect x="709.3" y="332.0" width="1.3" height="5.3" fill="#333"/>
<rect x="779.3" y="332.0" width="1.3" height="5.3" fill="#555"/>
<path d="M710 345.1 H708.6 Q707.4 345.1 707.4 346.5 V354.4 Q707.4 355.8 708.8 355.8 H730" fill="none" stroke="#e02828" stroke-width="0.85"/>
<rect x="710.0" y="342.6" width="48.9" height="2.4" fill="#f08484"/>
<rect x="710.0" y="345.0" width="48.9" height="2.7" fill="#808080"/>
<text x="705.6" y="347.1" text-anchor="end">9/30</text>
<text x="763.5" y="347.1" text-anchor="start">11/15</text>
<line x1="758.9" y1="345.2" x2="781" y2="345.2" stroke="#e02828" stroke-width="1"/>
<path d="M729.8 353 L733 355.9 L729.8 358.8 Z" fill="#e02828"/>
<rect x="732.8" y="353.3" width="48.0" height="2.4" fill="#f08484"/>
<rect x="732.8" y="355.7" width="48.0" height="2.7" fill="#808080"/>
<text x="727.6" y="357.8" text-anchor="end">10/22</text>
<text x="785.4" y="357.8" text-anchor="start">12/6</text>
<path d="M780.8 355.6 H782.4 Q783.6 355.6 783.6 356.8 V371" fill="none" stroke="#e02828" stroke-width="1"/>
<path d="M778.8 371.4 H786 L782.4 375.6 Z" fill="#e02828"/>
<rect x="780.8" y="364.7" width="10.8" height="1.5" fill="#000"/>
<rect x="780.8" y="367.7" width="10.8" height="1.2" fill="#808080"/>
<rect x="780.8" y="364.0" width="1.3" height="5.3" fill="#333"/>
<rect x="790.3" y="364.0" width="1.3" height="5.3" fill="#555"/>
<rect x="780.8" y="374.9" width="10.4" height="2.4" fill="#f08484"/>
<rect x="780.8" y="377.3" width="10.4" height="2.7" fill="#808080"/>
<text x="776.6" y="379.2" text-anchor="end">12/7</text>
<text x="796.0" y="379.2" text-anchor="start">12/16</text>
<line x1="721.0" y1="88.3" x2="781" y2="88.3" stroke="#4eb2ca" stroke-width="0.85"/>
<line x1="727.0" y1="120.0" x2="781" y2="120.0" stroke="#4eb2ca" stroke-width="0.85"/>
<line x1="727.0" y1="138.2" x2="781" y2="138.2" stroke="#4eb2ca" stroke-width="0.85"/>
<line x1="748.0" y1="281.3" x2="781" y2="281.3" stroke="#4eb2ca" stroke-width="0.85"/>
<line x1="772.5" y1="302.4" x2="781" y2="302.4" stroke="#4eb2ca" stroke-width="0.85"/>
<line x1="751.8" y1="313.2" x2="781" y2="313.2" stroke="#4eb2ca" stroke-width="0.85"/>
<line x1="751.8" y1="323.9" x2="781" y2="323.9" stroke="#4eb2ca" stroke-width="0.85"/>
</g></svg>
<div class="a" style="left:1px;top:524.5px;width:840px;height:1px;background:#555;"></div>
<div class="a" style="left:1px;top:580px;width:840px;height:1px;background:#555;"></div>
<div class="a" style="left:101px;top:525px;width:1px;height:55.5px;background:#555;"></div>
<div class="a" style="left:3.7px;top:544.1px;font-size:6.9px;line-height:8.1px;white-space:nowrap;direction:ltr;">Project: <span id="pj" style="display:inline-block;unicode-bidi:isolate;direction:rtl;font-size:6.2px;position:relative;top:-0.7px;transform:scaleX(0.897);transform-origin:0 50%;">برنامه زمانبندی پروژه مسکونی سه طبقه</span><br>Date: Mon 1/29/24</div>
<div class="a" style="left:0;width:842px;top:583.9px;text-align:center;font-size:6.9px;line-height:8px;">Page 5</div>
<div class="lg" style="left:109.1px;top:529.9px;">Task</div>
<div class="lg" style="left:109.1px;top:539.9px;">Split</div>
<div class="lg" style="left:109.1px;top:549.9px;">Milestone</div>
<div class="lg" style="left:109.1px;top:559.9px;">Summary</div>
<div class="lg" style="left:109.1px;top:571.0px;">Project Summary</div>
<div class="lg" style="left:232.0px;top:529.9px;">Inactive Task</div>
<div class="lg" style="left:232.0px;top:539.9px;">Inactive Milestone</div>
<div class="lg" style="left:232.0px;top:549.9px;">Inactive Summary</div>
<div class="lg" style="left:232.0px;top:559.9px;">Manual Task</div>
<div class="lg" style="left:232.0px;top:571.0px;">Duration-only</div>
<div class="lg" style="left:354.7px;top:529.9px;">Manual Summary Rollup</div>
<div class="lg" style="left:354.7px;top:539.9px;">Manual Summary</div>
<div class="lg" style="left:354.7px;top:549.9px;">Start-only</div>
<div class="lg" style="left:354.7px;top:559.9px;">Finish-only</div>
<div class="lg" style="left:354.7px;top:571.0px;">External Tasks</div>
<div class="lg" style="left:477.8px;top:529.9px;">External Milestone</div>
<div class="lg" style="left:477.8px;top:539.9px;">Deadline</div>
<div class="lg" style="left:477.8px;top:549.9px;">Critical</div>
<div class="lg" style="left:477.8px;top:559.9px;">Critical Split</div>
<div class="lg" style="left:477.8px;top:571.0px;">Baseline</div>
<div class="lg" style="left:600.8px;top:529.9px;">Baseline Milestone</div>
<div class="lg" style="left:600.8px;top:539.9px;">Baseline Summary</div>
<div class="lg" style="left:600.8px;top:549.9px;">Progress</div>
<div class="lg" style="left:600.8px;top:559.9px;">Manual Progress</div>
<div class="lg" style="left:600.8px;top:571.0px;">Slippage</div>
<svg class="a" style="left:0;top:0;" width="842" height="595" viewBox="0 0 842 595">
<rect x="173.7" y="530" width="51.3" height="5" fill="#6bbcd0"/>
<line x1="175.4" y1="544.3" x2="225" y2="544.3" stroke="#8ccad8" stroke-width="3" stroke-dasharray="0.8 1.75"/>
<path d="M176.2 550.1 L178.9 552.8 L176.2 555.5 L173.5 552.8 Z" fill="#000"/>
<rect x="175.7" y="561.0" width="47.0" height="1.3" fill="#000"/>
<rect x="175.7" y="560.2" width="1.5" height="5.5" fill="#000"/>
<rect x="221.2" y="560.2" width="1.5" height="5.5" fill="#000"/>
<rect x="175.7" y="571.1" width="47.0" height="1.3" fill="#6a6a6a"/>
<rect x="175.7" y="570.3" width="1.5" height="5.5" fill="#444"/>
<rect x="221.2" y="570.3" width="1.5" height="5.5" fill="#444"/>
<rect x="296.8" y="530.4" width="50.6" height="4.3" fill="#fff" stroke="#d4d4d4" stroke-width="0.6"/>
<path d="M299 540.2 L301.4 542.6 L299 545 L296.6 542.6 Z" fill="#fff" stroke="#b8b8b8" stroke-width="0.6"/>
<rect x="298.4" y="552.1" width="47" height="1.4" fill="#cfcfcf"/>
<rect x="298.4" y="550.6" width="1.5" height="5.4" fill="#8a8a8a"/><rect x="344.3" y="550.6" width="1.5" height="5.4" fill="#8a8a8a"/>
<rect x="298" y="560.4" width="47.6" height="5" fill="#92c02c"/>
<rect x="298" y="560.2" width="1.2" height="5.4" fill="#4a7a10"/><rect x="344.6" y="560.2" width="1.2" height="5.4" fill="#4a7a10"/>
<defs><linearGradient id="dg" x1="0" x2="1" y1="0" y2="0"><stop offset="0" stop-color="#fff"/><stop offset="0.12" stop-color="#d8eab4"/><stop offset="0.88" stop-color="#d8eab4"/><stop offset="1" stop-color="#fff"/></linearGradient></defs>
<rect x="297" y="571" width="50.4" height="5" fill="url(#dg)"/>
<rect x="296.6" y="571" width="0.5" height="5" fill="#cfe0a8"/><rect x="347.2" y="571" width="0.5" height="5" fill="#cfe0a8"/>
<rect x="419.3" y="532.2" width="51.4" height="2.4" fill="#a9d05e"/>
<rect x="421.4" y="540.6" width="46.8" height="1.3" fill="#000"/>
<rect x="421.4" y="539.9" width="1.5" height="5.5" fill="#000"/>
<rect x="466.7" y="539.9" width="1.5" height="5.5" fill="#000"/>
<path d="M423 550.6 H420 V555.6 H423" fill="none" stroke="#1f8f9f" stroke-width="1.1"/>
<path d="M421 560.6 H424 V565.6 H421" fill="none" stroke="#1f8f9f" stroke-width="1.1"/>
<rect x="419.3" y="571" width="51.4" height="5" fill="#c8c8c8"/>
<path d="M544.6 530.3 L547 532.7 L544.6 535.1 L542.2 532.7 Z" fill="#fff" stroke="#555" stroke-width="0.6"/>
<path d="M543.5 540 H545.7 V542.2 H547.1 L544.6 545.2 L542.1 542.2 H543.5 Z" fill="#5cb02c"/>
<rect x="542" y="550.5" width="51.5" height="5.2" fill="#f48a8a"/>
<line x1="543.6" y1="564.2" x2="593.6" y2="564.2" stroke="#e47878" stroke-width="2" stroke-dasharray="0.6 1.85"/>
<rect x="542" y="572.6" width="51.5" height="2.6" fill="#848484"/>
<path d="M667.6 530.3 L670 532.7 L667.6 535.1 L665.2 532.7 Z" fill="#fff" stroke="#555" stroke-width="0.6"/>
<rect x="667.4" y="543.8" width="46.8" height="1.3" fill="#666"/>
<rect x="667.4" y="540.1" width="1.5" height="5.5" fill="#444"/>
<rect x="712.7" y="540.1" width="1.5" height="5.5" fill="#444"/>
<rect x="665.1" y="552.3" width="51.1" height="1.4" fill="#3c8ad8"/>
<rect x="665.1" y="562.4" width="51.1" height="1.4" fill="#5c7c2c"/>
<rect x="665.1" y="574.1" width="51.1" height="1.5" fill="#0c2c5c"/>
</svg>
</body></html>
